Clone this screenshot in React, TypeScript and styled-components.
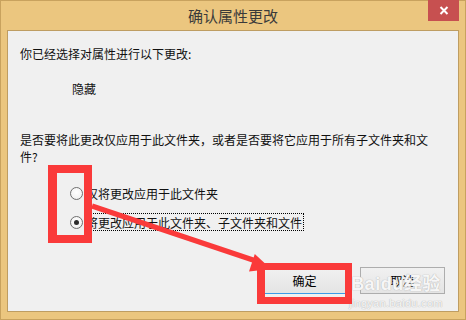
import React from 'react';
import styled, { createGlobalStyle } from 'styled-components';

const GlobalStyle = createGlobalStyle`
  html, body { margin: 0; padding: 0; background: #EBC67F; }
  body { font-family: "Noto Sans CJK SC", "Noto Sans", sans-serif; }
  * { box-sizing: border-box; }
`;

const Stage = styled.div`
  position: relative;
  width: 466px;
  height: 320px;
  overflow: hidden;
`;

const Window = styled.div`
  width: 466px;
  height: 320px;
  background: #EBC67F;
  border: 1px solid #C8A25E;
  padding: 0 6px 7px;
  display: flex;
  flex-direction: column;
`;

const TitleBar = styled.div`
  height: 29px;
  display: grid;
  grid-template-columns: 1fr auto 1fr;
  align-items: center;
`;

const Title = styled.div`
  grid-column: 2;
  font-size: 15px;
  line-height: 20px;
  color: #3a3a3a;
  padding-top: 1px;
`;

const CloseButton = styled.div`
  grid-column: 3;
  justify-self: end;
  align-self: start;
  margin-top: -1px;
  width: 31px;
  height: 21px;
  background: #C75050;
  display: flex;
  align-items: center;
  justify-content: center;
`;

const Content = styled.div`
  height: 282px;
  background: #F0F0F0;
  border: 1px solid #BE9D62;
  display: flex;
  flex-direction: column;
  color: #111;
  font-size: 12px;
  line-height: 17px;
`;

const Intro = styled.div`
  margin-top: 14px;
  padding-left: 12px;
`;

const Value = styled.div`
  margin-top: 18px;
  padding-left: 64px;
`;

const Question = styled.div`
  margin-top: 34px;
  margin-left: 12px;
  width: 416px;
`;

const RadioGroup = styled.div`
  margin-top: 19px;
  padding-left: 62px;
  display: flex;
  flex-direction: column;
  gap: 11px;
`;

const RadioRow = styled.div`
  display: flex;
  align-items: center;
  height: 18px;
`;

const RadioCircle = styled.div<{ $checked?: boolean }>`
  width: 13px;
  height: 13px;
  border-radius: 50%;
  border: 1px solid #6f6f6f;
  background: radial-gradient(circle at 50% 40%, #ffffff 0%, #f4f4f4 60%, #e2e2e2 100%);
  display: flex;
  align-items: center;
  justify-content: center;
  &::after {
    content: '';
    display: ${(p) => (p.$checked ? 'block' : 'none')};
    width: 5px;
    height: 5px;
    border-radius: 50%;
    background: #2b2b2b;
  }
`;

const RadioLabel = styled.div<{ $focused?: boolean }>`
  margin-left: 1px;
  height: 18px;
  padding: 0 1px;
  border: 1px dotted ${(p) => (p.$focused ? '#000' : 'transparent')};
  display: flex;
  align-items: center;
  white-space: nowrap;
`;

const ButtonRow = styled.div`
  margin-top: 36px;
  padding-right: 13px;
  display: flex;
  justify-content: flex-end;
  gap: 13px;
`;

const Button = styled.div<{ $primary?: boolean }>`
  width: 85px;
  height: 27px;
  border: 1px solid ${(p) => (p.$primary ? '#3C9BE8' : '#ADADAD')};
  background: linear-gradient(#F1F1F1, #E4E4E4);
  display: flex;
  align-items: center;
  justify-content: center;
  font-size: 12px;
  color: #000;
`;

const Watermark = styled.div`
  position: absolute;
  left: 349px;
  top: 274px;
  display: flex;
  flex-direction: column;
  align-items: center;
  color: rgba(255, 255, 255, 0.9);
  text-shadow: 0 0 1px #b9b9b9, 0 0 1px #b9b9b9;
  pointer-events: none;
`;

const WatermarkMain = styled.div`
  font-family: "Liberation Sans", "Noto Sans CJK SC", sans-serif;
  font-weight: bold;
  font-size: 18px;
  line-height: 20px;
  letter-spacing: 0.5px;
`;

const WatermarkSub = styled.div`
  font-family: "Liberation Sans", sans-serif;
  font-size: 11px;
  line-height: 12px;
  margin-top: 3px;
  letter-spacing: 0.3px;
`;

const Overlay = styled.svg`
  position: absolute;
  left: 0;
  top: 0;
  width: 466px;
  height: 320px;
  pointer-events: none;
`;

export default function App() {
  return (
    <>
      <GlobalStyle />
      <Stage>
        <Window>
          <TitleBar>
            <Title>确认属性更改</Title>
            <CloseButton>
              <svg width="10" height="9" viewBox="0 0 10 9">
                <path d="M1.5 1 L8.5 8 M8.5 1 L1.5 8" stroke="#fff" strokeWidth="2" />
              </svg>
            </CloseButton>
          </TitleBar>
          <Content>
            <Intro>你已经选择对属性进行以下更改:</Intro>
            <Value>隐藏</Value>
            <Question>是否要将此更改仅应用于此文件夹，或者是否要将它应用于所有子文件夹和文件?</Question>
            <RadioGroup>
              <RadioRow>
                <RadioCircle />
                <RadioLabel>仅将更改应用于此文件夹</RadioLabel>
              </RadioRow>
              <RadioRow>
                <RadioCircle $checked />
                <RadioLabel $focused>将更改应用于此文件夹、子文件夹和文件</RadioLabel>
              </RadioRow>
            </RadioGroup>
            <ButtonRow>
              <Button $primary>确定</Button>
              <Button>取消</Button>
            </ButtonRow>
          </Content>
        </Window>
        <Watermark>
          <WatermarkMain>Baidu经验</WatermarkMain>
          <WatermarkSub>jingyan.baidu.com</WatermarkSub>
        </Watermark>
        <Overlay viewBox="0 0 466 320">
          <path
            fillRule="evenodd"
            fill="#FA3A3A"
            d="M48 165 H92 V243 H48 Z M57 173 V235 H84 V173 Z"
          />
          <line x1="92" y1="206" x2="256" y2="261" stroke="#FA3A3A" strokeWidth="5.5" />
          <polygon points="271,269 254.8,254 249,271.5" fill="#FA3A3A" />
          <path
            fillRule="evenodd"
            fill="#FA3A3A"
            d="M257 263 H352 V304 H257 Z M265 270 V297 H345 V270 Z"
          />
        </Overlay>
      </Stage>
    </>
  );
}
